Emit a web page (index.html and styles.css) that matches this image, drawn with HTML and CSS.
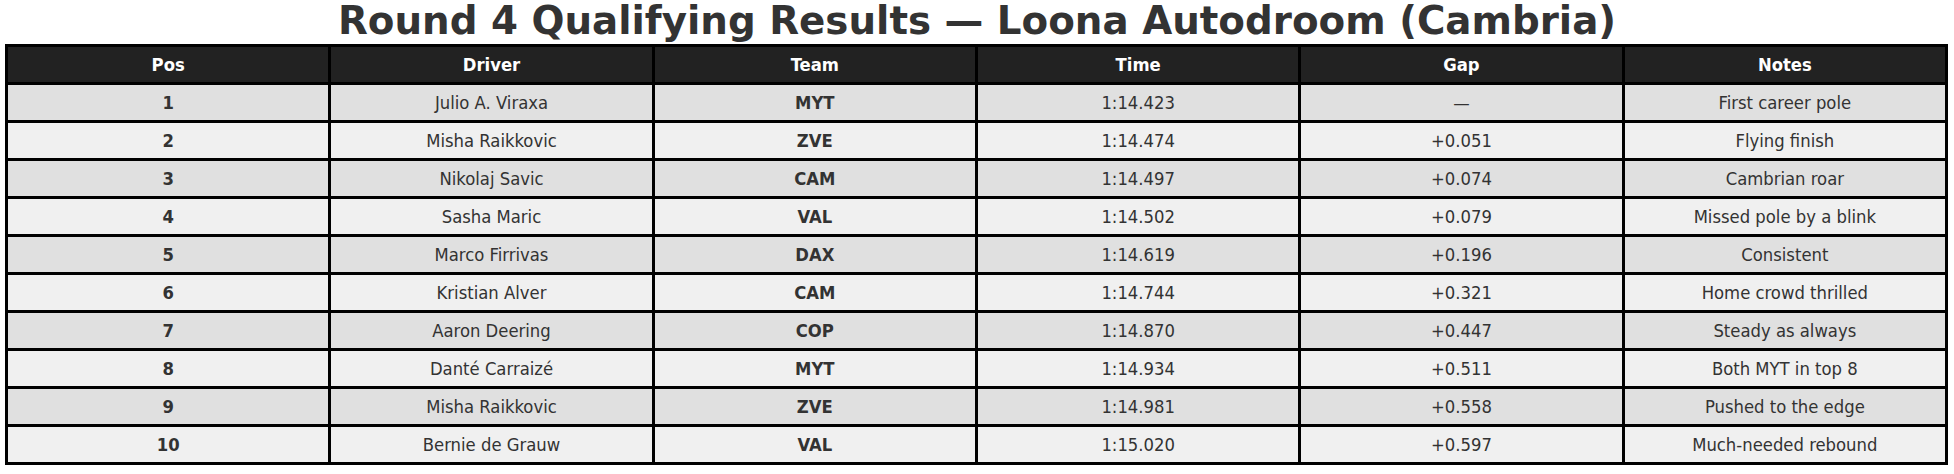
FILE: index.html
```html
<!DOCTYPE html>
<html>
<head>
<meta charset="utf-8">
<link rel="stylesheet" href="styles.css">
</head>
<body>
<h1 class="title">Round 4 Qualifying Results — Loona Autodroom (Cambria)</h1>
<table class="results">
<thead>
<tr><th>Pos</th><th>Driver</th><th>Team</th><th>Time</th><th>Gap</th><th>Notes</th></tr>
</thead>
<tbody>
<tr><td class="b">1</td><td>Julio A. Viraxa</td><td class="b">MYT</td><td>1:14.423</td><td>—</td><td>First career pole</td></tr>
<tr><td class="b">2</td><td>Misha Raikkovic</td><td class="b">ZVE</td><td>1:14.474</td><td>+0.051</td><td>Flying finish</td></tr>
<tr><td class="b">3</td><td>Nikolaj Savic</td><td class="b">CAM</td><td>1:14.497</td><td>+0.074</td><td>Cambrian roar</td></tr>
<tr><td class="b">4</td><td>Sasha Maric</td><td class="b">VAL</td><td>1:14.502</td><td>+0.079</td><td>Missed pole by a blink</td></tr>
<tr><td class="b">5</td><td>Marco Firrivas</td><td class="b">DAX</td><td>1:14.619</td><td>+0.196</td><td>Consistent</td></tr>
<tr><td class="b">6</td><td>Kristian Alver</td><td class="b">CAM</td><td>1:14.744</td><td>+0.321</td><td>Home crowd thrilled</td></tr>
<tr><td class="b">7</td><td>Aaron Deering</td><td class="b">COP</td><td>1:14.870</td><td>+0.447</td><td>Steady as always</td></tr>
<tr><td class="b">8</td><td>Danté Carraizé</td><td class="b">MYT</td><td>1:14.934</td><td>+0.511</td><td>Both MYT in top 8</td></tr>
<tr><td class="b">9</td><td>Misha Raikkovic</td><td class="b">ZVE</td><td>1:14.981</td><td>+0.558</td><td>Pushed to the edge</td></tr>
<tr><td class="b">10</td><td>Bernie de Grauw</td><td class="b">VAL</td><td>1:15.020</td><td>+0.597</td><td>Much-needed rebound</td></tr>
</tbody>
</table>
</body>
</html>
```

FILE: styles.css
```css
html, body {
  margin: 0;
  padding: 0;
  background: #ffffff;
}
body {
  font-family: "DejaVu Sans", sans-serif;
  color: #333333;
}
.title {
  margin: 0;
  height: 44px;
  font-size: 38.8px;
  font-weight: bold;
  line-height: 42px;
  text-align: center;
  color: #333333;
  white-space: nowrap;
}
.results {
  margin-left: 5px;
  width: 1943px;
  table-layout: fixed;
  border-collapse: collapse;
  border: 3px solid #000;
}
.results th, .results td {
  border: 3px solid #000;
  height: 35px;
  padding: 0;
  text-align: center;
  font-family: "DejaVu Sans Condensed", "DejaVu Sans", sans-serif;
  font-stretch: condensed;
  font-size: 18.3px;
  white-space: nowrap;
}
.results th {
  background: #222222;
  color: #ffffff;
  font-weight: bold;
}
.results tbody tr:nth-child(odd) td { background: #e0e0e0; }
.results tbody tr:nth-child(even) td { background: #f0f0f0; }
.results td.b { font-weight: bold; }
```
